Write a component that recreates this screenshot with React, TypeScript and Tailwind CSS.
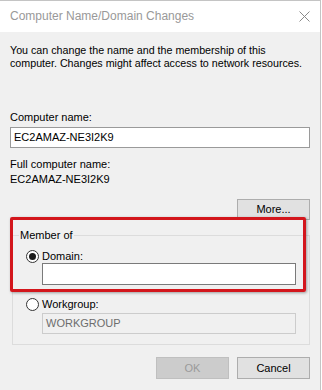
import React from "react";

function Radio({ checked }: { checked: boolean }) {
  return (
    <span className="flex h-[13px] w-[13px] items-center justify-center rounded-full border border-[#333] bg-white">
      {checked && <span className="h-[7px] w-[7px] rounded-full bg-[#1a1a1a]" />}
    </span>
  );
}

export default function App() {
  return (
    <div
      className="relative h-[390px] w-[322px] overflow-hidden bg-white text-[11px] leading-[13px] text-black"
      style={{ fontFamily: '"Liberation Sans", Arial, sans-serif' }}
    >
      <div className="flex h-full w-[321px] flex-col border-r border-t border-[#c4c4c4]">
        {/* title bar */}
        <div className="flex h-[31px] shrink-0 items-center justify-between bg-white pl-[10px] pr-[9px]">
          <span className="text-[12px] text-[#999]">Computer Name/Domain Changes</span>
          <svg width="11" height="11" viewBox="0 0 11 11" className="mr-[1px]">
            <path d="M0.5 0.5 L10.5 10.5 M10.5 0.5 L0.5 10.5" stroke="#8a8a8a" strokeWidth="1" />
          </svg>
        </div>

        {/* body */}
        <div className="flex flex-1 flex-col bg-[#f0f0f0] px-[10px]">
          <p className="mt-[12px] whitespace-nowrap text-[10.7px]">
            You can change the name and the membership of this
            <br />
            computer. Changes might affect access to network resources.
          </p>

          <div className="mt-[41px]">Computer name:</div>
          <div className="mt-[3px] flex h-[21px] items-center border border-[#9a9a9a] bg-white pl-[3px]">
            EC2AMAZ-NE3I2K9
          </div>

          <div className="mt-[10px]">Full computer name:</div>
          <div className="mt-[2px]">EC2AMAZ-NE3I2K9</div>

          <button className="mt-[13px] h-[21px] w-[73px] self-end border border-[#adadad] bg-[#e1e1e1] text-[11px]">
            More...
          </button>

          <fieldset className="ml-[2px] mt-[9px] border border-[#dcdcdc] pb-[10px]">
            <legend className="ml-[6px] px-[1px]">Member of</legend>
            <div className="ml-[13px] mt-[8px] flex items-center gap-[3px]">
              <Radio checked />
              <span>Domain:</span>
            </div>
            <div className="ml-[29px] h-[22px] w-[254px] border border-[#7a7a7a] bg-white" />
            <div className="ml-[13px] mt-[13px] flex items-center gap-[3px]">
              <Radio checked={false} />
              <span>Workgroup:</span>
            </div>
            <div className="ml-[29px] mt-[2px] flex h-[21px] w-[254px] items-center border border-[#cccccc] bg-[#f0f0f0] pl-[3px] text-[#6d6d6d]">
              WORKGROUP
            </div>
          </fieldset>

          <div className="mt-[12px] flex justify-end gap-[8px]">
            <button className="h-[22px] w-[73px] border border-[#bfbfbf] bg-[#cccccc] text-[11px] text-[#9a9a9a]">
              OK
            </button>
            <button className="h-[22px] w-[73px] border border-[#adadad] bg-[#e1e1e1] text-[11px]">
              Cancel
            </button>
          </div>
        </div>
      </div>

      {/* red highlight annotation */}
      <div className="absolute left-[10px] top-[217px] h-[75px] w-[296px] rounded-[2px] border-[3px] border-[#d3161c] shadow-[1px_1px_3px_rgba(0,0,0,0.35)]" />
    </div>
  );
}
